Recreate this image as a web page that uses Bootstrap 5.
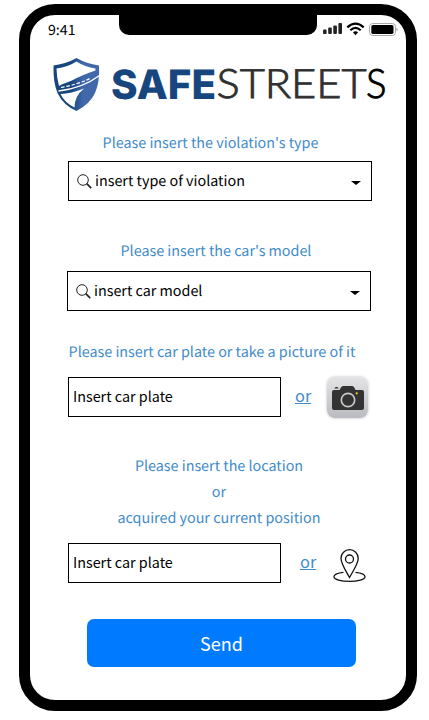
<!DOCTYPE html>
<html lang="en">
<head>
<meta charset="utf-8">
<meta name="viewport" content="width=device-width, initial-scale=1">
<title>SafeStreets</title>
<link rel="stylesheet" href="https://cdn.jsdelivr.net/npm/bootstrap@5.3.0/dist/css/bootstrap.min.css">
<style>
body{font-family:"Noto Sans CJK SC","Noto Sans",sans-serif;font-size:14.35px;color:#000;background:#fff;height:720px;overflow:hidden;text-rendering:geometricPrecision}
.phone{width:398px;height:707px;margin:4px 0 0 19px;border:11px solid #000;border-radius:36px}
.statusbar{height:35px;padding-left:18px;padding-right:8px}
.notch{width:198px;height:20px;background:#000;border-radius:0 0 10px 10px;margin-left:14px}
.clock{width:57px;line-height:31px;font-size:14.2px}
.prompt{color:#428bca;line-height:26px;text-align:center;white-space:nowrap;padding-top:1px;margin-bottom:-1px}
.field{height:40px;border:1px solid #000;border-radius:0;line-height:38px;background:#fff;white-space:nowrap}
.wide{width:304px;padding:0 10px 0 8px}
.wide span{margin-top:-1px;margin-left:3px}
.plate{width:213px;padding:0 4px 3px;color:#000}
.plate::placeholder{color:#000;opacity:1}
.gap-a{margin-top:36px}.gap-b{margin-top:27px}.gap-c{margin-top:35px}
.row-start{margin-left:38px}
.off-violation{padding-right:15px}.off-model{padding-right:4px}.off-plate{padding-right:12px}.off-location{padding-left:2px}
.field-violation{margin-top:6px}.field-model{margin-left:37px}
.plate-row{margin-top:13px;height:40px}
.or-plate{margin-left:14px}.or-location{margin-left:19px}
.pin{margin-left:16px}
.orlink{color:#428bca;font-size:16.4px;line-height:36px;height:40px;width:16px}
.camera{width:41px;height:41px;border-radius:8px;background:linear-gradient(#e4e4e6,#b9bbc0);box-shadow:0 0 3px #bbb;margin-left:16px}
.send{width:269px;height:48px;background:#007bff;border:0;border-radius:7px;color:#fff;font-size:18px;margin:36px 0 0 57px;padding:0}
.send:hover{background:#006fe6;color:#fff}
.caret{width:0;height:0;border:5px solid transparent;border-top:4px solid #000;border-bottom:0;margin-top:4px}
</style>
</head>
<body>
<main class="phone d-flex flex-column">
  <header class="statusbar d-flex align-items-start">
    <span class="clock">9:41</span>
    <div class="notch"></div>
    <svg class="ms-auto flex-shrink-0" width="77" height="29" viewBox="321 15 77 29" aria-hidden="true">
      <g fill="#222"><rect x="323" y="29.5" width="3.6" height="4.5" rx="1"/><rect x="328.2" y="27.5" width="3.6" height="6.5" rx="1"/><rect x="333.3" y="25.5" width="3.6" height="8.5" rx="1"/><rect x="338.4" y="23" width="3.6" height="11" rx="1"/></g>
      <g fill="none" stroke="#000" stroke-width="2.2"><path d="M347.3 27.4Q355.5 19.8 363.7 27.4"/><path d="M350.3 30.2Q355.5 25.6 360.7 30.2"/></g>
      <path d="M352.9 32.3Q355.5 30.3 358.1 32.3L355.5 35.2Z"/>
      <rect x="369.500" y="23.500" width="26" height="12" rx="3.200" fill="#fff" stroke="#aaa"/><rect x="371.300" y="25.100" width="22.200" height="8.800" rx="1.600"/><path d="M396.500 27.500Q399 29.500 396.500 31.500Z" fill="#aaa"/>
    </svg>
  </header>
  <svg class="flex-shrink-0" width="376" height="79" viewBox="30 50 376 79" role="img">
    <defs><linearGradient id="shield" x2="1"><stop offset=".4" stop-color="#17467f"/><stop offset=".65" stop-color="#4068aa"/></linearGradient></defs>
    <path fill="url(#shield)" d="M53.500 65.500Q67 63.500 76.500 58Q86 63.500 99 65.500Q100 82 95 93Q90 104 76.500 111Q63 105 57.500 93Q53 82 53.500 65.500Z"/>
    <path fill="#fff" d="M56.500 68.500Q68 67 76.500 61.500Q85 67 95.500 68.500L95.400 70.500Q82 75 72 80.500L61.500 84.500L59 86Q56.500 77 56.500 68.500Z"/>
    <path fill="none" stroke="#fff" stroke-width="1.200" stroke-dasharray="3.500 1.800" d="M61 87.500Q78 84.500 91 78"/>
    <path fill="none" stroke="#fff" stroke-width="1.300" d="M58.500 91Q82 88.500 99.500 75.500"/>
    <path fill="#fff" d="M60.500 94Q71 93.500 84 88.500Q74.500 96 74.500 107.500Q64.500 102.500 60.500 94Z"/>
    <text x="111" y="98.500" font-family="Inter,sans-serif" font-size="40.500" font-weight="800" fill="#17467f" textLength="105" lengthAdjust="spacingAndGlyphs">SAFE</text>
    <text x="216.500" y="98.300" font-family="Lato,sans-serif" font-size="40.500" font-weight="300" fill="#303030" stroke="#303030" stroke-width=".9" textLength="150" lengthAdjust="spacingAndGlyphs">STREET</text>
    <text x="366" y="98.300" font-family="Lato,sans-serif" font-size="40.500" font-weight="300" fill="#000" stroke="#000" stroke-width=".9" textLength="20.500" lengthAdjust="spacingAndGlyphs">S</text>
  </svg>

  <div class="prompt off-violation">Please insert the violation's type</div>
  <div class="field wide field-violation d-flex align-items-center row-start">
    <svg width="15" height="15" viewBox="0 0 15 15" fill="none" stroke="#222"><circle cx="6" cy="6" r="5.300"/><path stroke-width="1.700" d="M9.700 9.700l4.500 4.500"/></svg>
    <span>insert type of violation</span><i class="caret ms-auto"></i>
  </div>

  <div class="prompt gap-a off-model">Please insert the car's model</div>
  <div class="field wide field-model d-flex align-items-center mt-2">
    <svg width="15" height="15" viewBox="0 0 15 15" fill="none" stroke="#222"><circle cx="6" cy="6" r="5.300"/><path stroke-width="1.700" d="M9.700 9.700l4.500 4.500"/></svg>
    <span>insert car model</span><i class="caret ms-auto"></i>
  </div>

  <div class="prompt gap-b off-plate">Please insert car plate or take a picture of it</div>
  <div class="plate-row d-flex row-start">
    <input class="field plate" placeholder="Insert car plate" aria-label="Car plate">
    <a class="orlink or-plate" href="#">or</a>
    <svg class="camera flex-shrink-0" viewBox="0 0 41 41">
      <path fill="#333" d="M6 13H12.500Q14.500 9 16 9H25Q27 9 28.500 13H35Q37 13 37 15V31Q37 33 35 33H7Q5 33 5 31V15Q5 13 7 13ZM7.500 11.500Q7.500 10 9 10H10Q11.500 10 11.500 11.500Z"/>
      <circle cx="21" cy="23" r="6.700" fill="#333" stroke="#c8c9cc" stroke-width="1.700"/><circle cx="29.700" cy="16.300" r="1.100" fill="#ffd21c"/>
    </svg>
  </div>

  <div class="prompt gap-c off-location">Please insert the location<br>or<br>acquired your current position</div>
  <div class="plate-row d-flex row-start">
    <input class="field plate" placeholder="Insert car plate" aria-label="Position">
    <a class="orlink or-location" href="#">or</a>
    <svg class="pin flex-shrink-0" width="36" height="40" viewBox="332 543 36 40" fill="none" stroke="#111" stroke-width="1.300">
      <path d="M349.500 577.500C346 571 341 564 341 558.300A8.600 8.600 0 0 1 358.200 558.300C358.200 564 353 571 349.500 577.500Z"/><circle cx="349.500" cy="559" r="4"/>
      <path d="M343.500 572.300C337 573 334 574.800 334 576.700C334 579.500 341 581.300 349.500 581.300S365 579.500 365 576.700C365 574.800 362 573 355.500 572.300"/>
    </svg>
  </div>
  <button class="btn send flex-shrink-0" type="button">Send</button>
</main>
<script src="https://cdn.jsdelivr.net/npm/bootstrap@5.3.0/dist/js/bootstrap.bundle.min.js"></script>
</body>
</html>
